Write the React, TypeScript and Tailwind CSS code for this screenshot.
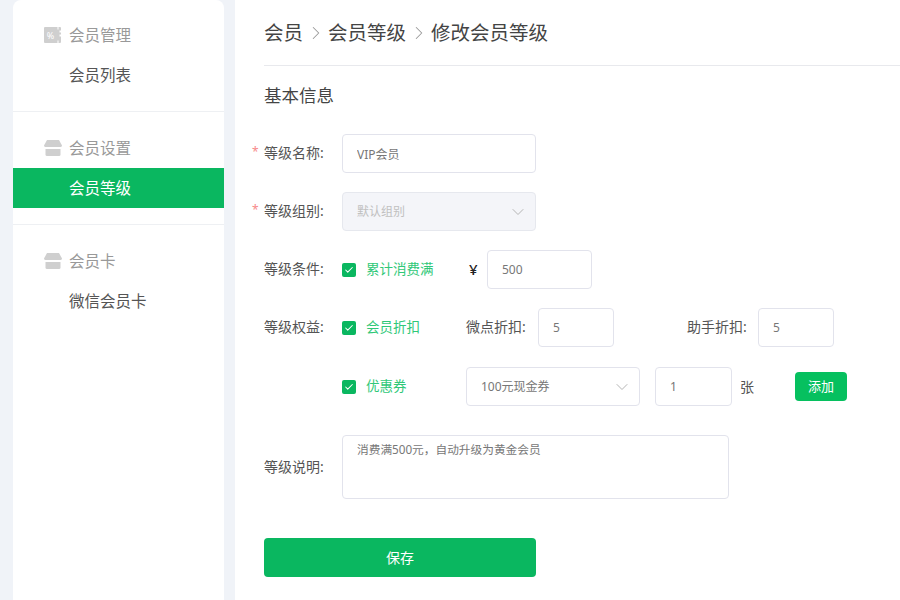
import { ChevronDown, ChevronRight, Check } from "lucide-react";

const font = "font-['Noto_Sans','Noto_Sans_CJK_SC',sans-serif]";

function CouponIcon() {
  return (
    <svg width="18" height="16" viewBox="0 0 18 16" className="shrink-0">
      <path d="M1 0h12.500v2.500h1V0H16a1 1 0 0 1 1 1v2.500h-1.500v2H17v2h-1.500v2H17V15a1 1 0 0 1-1 1h-1.500v-2.500h-1V16H1a1 1 0 0 1-1-1V1a1 1 0 0 1 1-1z" fill="#cfcfcf" />
      <text x="6.500" y="11.500" fontSize="9" textAnchor="middle" fill="#fff">%</text>
    </svg>
  );
}

function StoreIcon() {
  return (
    <svg width="18" height="16" viewBox="0 0 18 16" className="shrink-0">
      <path d="M3 0h12l3 5.500c0 .8-.7 1.500-1.500 1.500h-15C.7 7 0 6.300 0 5.500z" fill="#cfcfcf" />
      <path d="M1.500 9h15v5.500a1.500 1.500 0 0 1-1.500 1.500H3a1.500 1.500 0 0 1-1.500-1.500z" fill="#cfcfcf" />
    </svg>
  );
}

function MenuGroup({ icon, title, item, active, last }: { icon: React.ReactNode; title: string; item: string; active?: boolean; last?: boolean }) {
  return (
    <div className={last ? "pt-4" : "border-b border-[#eef0f3] pt-4 pb-4"}>
      <div className="flex h-10 items-center pl-[31px] text-[15.5px] text-[#999]">
        {icon}
        <span className="ml-[7px] pt-[2px]">{title}</span>
      </div>
      <div className={`flex h-10 items-center pt-[2px] pl-14 text-[15.5px] ${active ? "bg-[#0ab760] text-white" : "text-[#555]"}`}>{item}</div>
    </div>
  );
}

function TextInput({ value, width }: { value: string; width: string }) {
  return (
    <input
      readOnly
      defaultValue={value}
      className={`h-[39px] ${width} rounded border border-[#e2e3ec] bg-white px-[14px] text-[12px] text-[#777] outline-none`}
    />
  );
}

function Label({ text, required }: { text: string; required?: boolean }) {
  return (
    <div className="relative w-[78px] shrink-0 pb-[2px] text-[14px] text-[#555]">
      {required && <span className="absolute top-[1px] left-[-12px] text-[12px] text-[#f78a8a]">*</span>}
      {text}:
    </div>
  );
}

function CheckItem({ text, width }: { text: string; width: string }) {
  return (
    <div className={`flex ${width} shrink-0 items-center`}>
      <span className="flex h-[14px] w-[14px] items-center justify-center rounded-[2px] bg-[#0ab760]">
        <Check size={10} strokeWidth={2.5} className="text-white" />
      </span>
      <span className="ml-[10px] text-[13.5px] text-[#30c878]">{text}</span>
    </div>
  );
}

export default function App() {
  return (
    <div className={`flex h-screen overflow-hidden bg-[#f0f3f8] ${font}`}>
      <aside className="ml-[13px] h-full w-[211px] shrink-0 rounded-t-lg bg-white">
        <div className="-mt-px">
          <MenuGroup icon={<CouponIcon />} title="会员管理" item="会员列表" />
          <MenuGroup icon={<StoreIcon />} title="会员设置" item="会员等级" active />
          <MenuGroup icon={<StoreIcon />} title="会员卡" item="微信会员卡" last />
        </div>
      </aside>

      <main className="ml-[11px] flex-1 bg-white pl-[29px]">
        <div className="flex h-[66px] items-center border-b border-[#e8e9ed] text-[19.5px] text-[#444]">
          <span>会员</span>
          <ChevronRight size={22} strokeWidth={1.1} className="mx-[1.5px] text-[#999]" />
          <span>会员等级</span>
          <ChevronRight size={22} strokeWidth={1.1} className="mx-[1.5px] text-[#999]" />
          <span>修改会员等级</span>
        </div>
        <h2 className="flex h-[58px] items-center text-[17.5px] text-[#444]">基本信息</h2>

        <div className="mt-[10px] flex flex-col">
          <div className="flex items-center">
            <Label text="等级名称" required />
            <TextInput value="VIP会员" width="w-[194px]" />
          </div>

          <div className="mt-[19px] flex items-center">
            <Label text="等级组别" required />
            <div className="flex h-[39px] w-[194px] items-center justify-between rounded border border-[#e6e8ee] bg-[#f4f5f9] pr-[7px] pl-[14px] text-[12px] text-[#c0c0c0]">
              默认组别
              <ChevronDown size={20} strokeWidth={1.2} className="text-[#b5b5b5]" />
            </div>
          </div>

          <div className="mt-[19px] flex items-center">
            <Label text="等级条件" />
            <CheckItem text="累计消费满" width="w-[127px]" />
            <span className="w-[18px] text-[15px] font-medium text-[#222]">¥</span>
            <TextInput value="500" width="w-[105px]" />
          </div>

          <div className="mt-[19px] flex items-center">
            <Label text="等级权益" />
            <CheckItem text="会员折扣" width="w-[124px]" />
            <span className="w-[72px] pb-[2px] text-[14px] text-[#555]">微点折扣:</span>
            <TextInput value="5" width="w-[76px]" />
            <span className="ml-[73px] w-[71px] pb-[2px] text-[14px] text-[#555]">助手折扣:</span>
            <TextInput value="5" width="w-[76px]" />
          </div>

          <div className="mt-[20px] flex items-center pl-[78px]">
            <CheckItem text="优惠券" width="w-[124px]" />
            <div className="flex h-[39px] w-[174px] items-center justify-between rounded border border-[#e2e3ec] pr-[7px] pl-[14px] text-[12px] text-[#777]">
              100元现金券
              <ChevronDown size={20} strokeWidth={1.2} className="text-[#b5b5b5]" />
            </div>
            <div className="ml-[15px]">
              <TextInput value="1" width="w-[77px]" />
            </div>
            <span className="ml-2 text-[14px] text-[#555]">张</span>
            <button className="ml-[41px] h-[29px] w-[52px] rounded bg-[#06c05f] text-[13px] text-white">添加</button>
          </div>

          <div className="mt-[29px] flex items-center">
            <Label text="等级说明" />
            <textarea
              readOnly
              defaultValue="消费满500元，自动升级为黄金会员"
              className="h-16 w-[387px] resize-none rounded border border-[#e2e3ec] px-[14px] py-[5px] text-[11.7px] text-[#777] outline-none"
            />
          </div>

          <button className="mt-[39px] h-[39px] w-[272px] rounded bg-[#0ab760] text-[14px] text-white">保存</button>
        </div>
      </main>
    </div>
  );
}
